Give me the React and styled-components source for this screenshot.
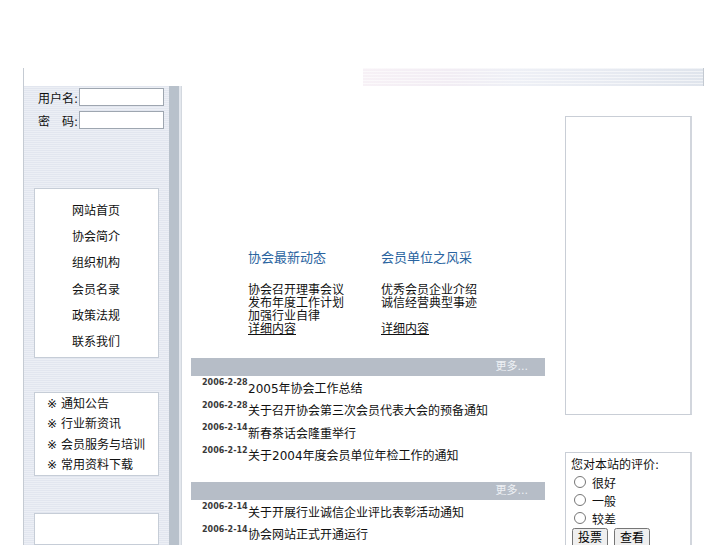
import React from "react";
import styled, { createGlobalStyle } from "styled-components";

const GlobalStyle = createGlobalStyle`
  html, body { margin: 0; padding: 0; background: #fff; }
  body {
    font-family: "DejaVu Sans", "Noto Sans CJK SC", sans-serif;
    font-size: 12px;
    color: #111;
  }
`;

const Page = styled.div`
  padding: 68px 0 0 23px;
  width: 681px;
`;

const TopRow = styled.div`
  display: flex;
  height: 18px;
  border-left: 1px solid #c5cbd3;
`;

const Banner = styled.div`
  margin-left: auto;
  width: 340px;
  border-right: 1px solid #c3c9d1;
  background:
    repeating-linear-gradient(to bottom, rgba(255,255,255,0.55) 0 1px, transparent 1px 3px),
    linear-gradient(to right, #f7f1f6 0%, #f2edf4 25%, #eef0f6 45%, #e8ebf2 70%, #dfe4ec 100%);
`;

const Main = styled.div`
  display: flex;
  border-left: 1px solid #c5cbd3;
  min-height: 459px;
`;

const LeftCol = styled.div`
  width: 145px;
  padding: 2px 0 0 10px;
  box-sizing: border-box;
  background: repeating-linear-gradient(to bottom, #e2e6ef 0 1px, #eceff5 1px 2px);
`;

const LeftBar = styled.div`
  width: 10px;
  background: #b8c1cb;
`;

const LeftEdge = styled.div`
  width: 2px;
  background: #e3e7ed;
  border-right: 1px solid #d3d8df;
`;

const LoginRow = styled.div`
  display: flex;
  align-items: center;
  height: 18px;
  margin-bottom: 5px;
  padding-left: 4px;
`;

const LoginLabel = styled.span`
  font-size: 12px;
  margin-right: 1px;
  white-space: nowrap;
`;

const TextInput = styled.input`
  width: 85px;
  height: 18px;
  box-sizing: border-box;
  border: 1px solid #9ea6b0;
  background: #fff;
  padding: 0 2px;
`;

const Panel = styled.div`
  width: 125px;
  box-sizing: border-box;
  background: #fff;
  border: 1px solid #c6cdd7;
  height: ${(p) => p.$h}px;
  margin-top: ${(p) => p.$mt}px;
  padding: ${(p) => p.$pad || "0"};
`;

const MenuItem = styled.div`
  line-height: 26.2px;
  font-size: 12px;
`;

const ListItem = styled.div`
  line-height: 20.4px;
  font-size: 12px;
`;

const Center = styled.div`
  width: 373px;
  padding-top: 164px;
`;

const Intro = styled.div`
  display: grid;
  grid-template-columns: 133px 1fr;
  padding-left: 66px;
`;

const IntroHead = styled.div`
  color: #2a64a0;
  font-size: 13px;
  line-height: 16px;
  margin-bottom: 18px;
`;

const IntroLine = styled.div`
  font-size: 12px;
  line-height: 13px;
  min-height: 13px;
`;

const IntroLink = styled.a`
  display: block;
  font-size: 12px;
  line-height: 13px;
  color: #111;
  text-decoration: underline;
`;

const Bar = styled.div`
  margin: ${(p) => p.$mt}px 0 0 9px;
  width: 354px;
  height: 18px;
  background: #b6bdc7;
  text-align: right;
  box-sizing: border-box;
  padding-right: 17px;
  font-size: 11px;
  line-height: 18px;
  color: #eef1f5;
`;

const NewsList = styled.div`
  padding-top: 1px;
`;

const NewsRow = styled.div`
  display: flex;
  align-items: center;
  padding-left: 20px;
  height: 22.5px;
`;

const DateCell = styled.div`
  width: 46px;
  flex: none;
  font-size: 8px;
  line-height: 11.25px;
  font-weight: bold;
  color: #3a3a3a;
`;

const NewsTitle = styled.div`
  font-size: 12px;
  white-space: nowrap;
  margin-top: -2px;
`;

const Right = styled.div`
  flex: 1;
  padding: 30px 0 0 10px;
`;

const AdBox = styled.div`
  width: 127px;
  height: 299px;
  box-sizing: border-box;
  border: 1px solid #c9ced6;
  border-right: 2px solid #d2d6dd;
  background: #fff;
`;

const VoteBox = styled.div`
  width: 127px;
  margin-top: 37px;
  box-sizing: border-box;
  border: 1px solid #c9ced6;
  border-right: 2px solid #d2d6dd;
  padding: 4px 5px 10px;
  background: #fff;
`;

const VoteTitle = styled.div`
  font-size: 12px;
  line-height: 16px;
`;

const RadioRow = styled.label`
  display: flex;
  align-items: center;
  height: 18px;
  font-size: 12px;
  input { margin: 0 6px 0 3px; width: 12px; height: 12px; }
`;

const Buttons = styled.div`
  display: flex;
  gap: 6px;
  margin-top: 1px;
  padding-left: 1px;
`;

const Btn = styled.button`
  font-family: "DejaVu Sans", "Noto Sans CJK SC", sans-serif;
  font-size: 12px;
  line-height: 14px;
  padding: 1px 4px;
`;

const menu = ["网站首页", "协会简介", "组织机构", "会员名录", "政策法规", "联系我们"];
const links = ["通知公告", "行业新资讯", "会员服务与培训", "常用资料下载"];

const news1 = [
  ["2006-2-28", "2005年协会工作总结"],
  ["2006-2-28", "关于召开协会第三次会员代表大会的预备通知"],
  ["2006-2-14", "新春茶话会隆重举行"],
  ["2006-2-12", "关于2004年度会员单位年检工作的通知"],
];
const news2 = [
  ["2006-2-14", "关于开展行业诚信企业评比表彰活动通知"],
  ["2006-2-14", "协会网站正式开通运行"],
];

function News({ items }) {
  return (
    <NewsList>
      {items.map(([d, t], i) => (
        <NewsRow key={i}>
          <DateCell>
            {d}
            <br />
            {"\u3000"}
          </DateCell>
          <NewsTitle>{t}</NewsTitle>
        </NewsRow>
      ))}
    </NewsList>
  );
}

export default function App() {
  return (
    <>
      <GlobalStyle />
      <Page>
        <TopRow>
          <Banner />
        </TopRow>
        <Main>
          <LeftCol>
            <LoginRow>
              <LoginLabel>用户名:</LoginLabel>
              <TextInput type="text" />
            </LoginRow>
            <LoginRow>
              <LoginLabel>密{"\u3000"}码:</LoginLabel>
              <TextInput type="password" />
            </LoginRow>
            <Panel $h={170} $mt={59} $pad="9px 0 0 37px">
              {menu.map((m) => (
                <MenuItem key={m}>{m}</MenuItem>
              ))}
            </Panel>
            <Panel $h={84} $mt={34} $pad="1px 0 0 12px">
              {links.map((m) => (
                <ListItem key={m}>※ {m}</ListItem>
              ))}
            </Panel>
            <Panel $h={32} $mt={37} />
          </LeftCol>
          <LeftBar />
          <LeftEdge />
          <Center>
            <Intro>
              <div>
                <IntroHead>协会最新动态</IntroHead>
                <IntroLine>协会召开理事会议</IntroLine>
                <IntroLine>发布年度工作计划</IntroLine>
                <IntroLine>加强行业自律</IntroLine>
                <IntroLink href="#">详细内容</IntroLink>
              </div>
              <div>
                <IntroHead>会员单位之风采</IntroHead>
                <IntroLine>优秀会员企业介绍</IntroLine>
                <IntroLine>诚信经营典型事迹</IntroLine>
                <IntroLine />
                <IntroLink href="#">详细内容</IntroLink>
              </div>
            </Intro>
            <Bar $mt={22}>更多...</Bar>
            <News items={news1} />
            <Bar $mt={15}>更多...</Bar>
            <News items={news2} />
          </Center>
          <Right>
            <AdBox />
            <VoteBox>
              <VoteTitle>您对本站的评价:</VoteTitle>
              <RadioRow><input type="radio" name="v" />很好</RadioRow>
              <RadioRow><input type="radio" name="v" />一般</RadioRow>
              <RadioRow><input type="radio" name="v" />较差</RadioRow>
              <Buttons>
                <Btn>投票</Btn>
                <Btn>查看</Btn>
              </Buttons>
            </VoteBox>
          </Right>
        </Main>
      </Page>
    </>
  );
}
